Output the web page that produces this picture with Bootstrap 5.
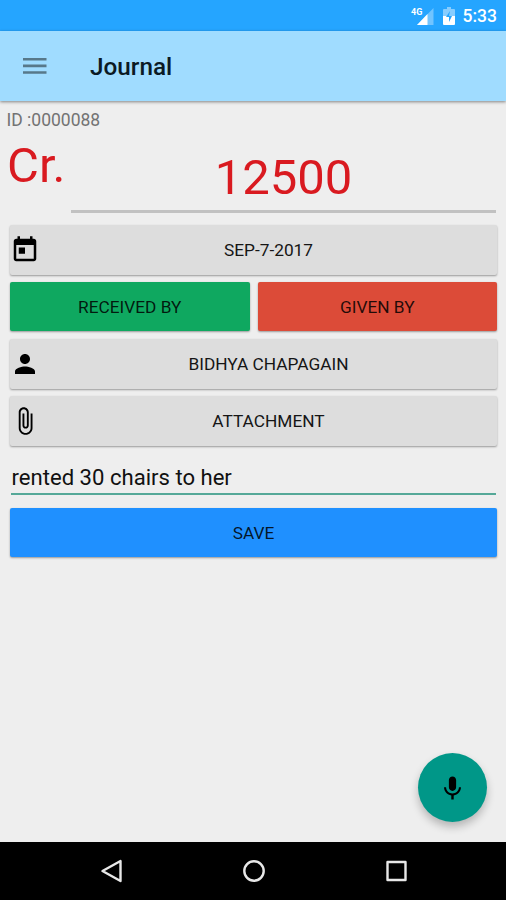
<!DOCTYPE html>
<html lang="en">
<head>
<meta charset="utf-8">
<meta name="viewport" content="width=device-width, initial-scale=1">
<title>Journal</title>
<link href="https://cdn.jsdelivr.net/npm/bootstrap@5.3.0/dist/css/bootstrap.min.css" rel="stylesheet">
<style>
  body { font-family: Roboto, "Liberation Sans", sans-serif; background: #eee; color: #111; height: 900px; overflow: hidden; }
  svg { display: block; flex: none; }
  .status-bar { height: 31px; background: #25a5ff; padding-right: 9px; }
  .clock { font-size: 17.5px; font-weight: 500; line-height: 31px; margin-left: 8px; padding-top: 1px; }
  .app-bar { height: 70px; background: #a0dcff; padding: 0 0 0 23px; box-shadow: 0 1px 3px rgba(0,0,0,.45); z-index: 1; }
  .app-title { font-size: 24.3px; font-weight: 500; line-height: 70px; margin-left: 43px; padding-top: 2px; color: #0b1a24; }
  .entry-id { font-size: 17.5px; line-height: 24px; padding: 7px 0 0 6.5px; color: #737373; }
  .amount-row { height: 88px; padding: 0 10px 0 7px; color: #d91a20; font-size: 49px; line-height: 58px; }
  .kind { width: 64px; padding-top: 5px; }
  .amount { height: 81px; padding-top: 17px; border-bottom: 3px solid #c1c1c1; }
  .entry-form { padding: 5px 9px 0 10px; gap: 7px; }
  .tile { height: 50px; padding: 0; border: 0; border-radius: 2px; font-size: 17.3px; line-height: 50px; color: #151515; background: #ddd; box-shadow: 0 1px 2px rgba(0,0,0,.36); }
  .tile:hover { background: #ddd; }
  .tile-in, .tile-out, .tile-save { height: 49px; color: rgba(0,0,0,.85); }
  .action-pair { padding: 0 0 1px; }
  .tile-in, .tile-in:hover { background: #0fa860; }
  .tile-out, .tile-out:hover { background: #dc4b38; }
  .tile-save, .tile-save:hover { background: #1f90ff; }
  .note { height: 42px; margin: 0 1px 6px 1px; padding-left: .5px; border-bottom: 2px solid #55a898; font-size: 22.100px; line-height: 48px; }
  .fab { width: 69px; height: 69px; right: 19px; bottom: 20px; padding: 1px 0 0; background: #009788; border: 0; box-shadow: 0 5px 8px rgba(0,0,0,.24); }
  .nav-keys { height: 58px; background: #000; padding-left: 97px; gap: 113px; }
</style>
<script src="https://cdn.jsdelivr.net/npm/bootstrap@5.3.0/dist/js/bootstrap.bundle.min.js"></script>
</head>
<body class="d-flex flex-column">
  <div class="status-bar d-flex align-items-center justify-content-end text-white">
    <svg width="24" height="20" viewBox="0 0 24 20"><path d="M22.500 2v17H6z" fill="#fff" opacity=".35"/><path d="M16.500 8v11H6z" fill="#fff"/><text x="0" y="9" font-size="9" font-weight="700" fill="#fff">4G</text></svg>
    <svg class="ms-2" width="12" height="18" viewBox="0 0 12 18"><path d="M4 0h4v2h3q1 0 1 1v6H0V3q0-1 1-1h3z" fill="#fff" opacity=".45"/><path d="M0 9h12v8q0 1-1 1H1q-1 0-1-1z" fill="#fff"/><path d="M7 4L3 10h3v5l3-6H6z" fill="#25a5ff"/></svg>
    <span class="clock">5:33</span>
  </div>

  <header class="app-bar d-flex align-items-center position-relative">
    <svg width="24" height="18" viewBox="0 0 24 18" fill="#57788a"><path d="M0 1h23.500v2.600H0zM0 7.600h23.500v2.600H0zM0 14.200h23.500v2.600H0z"/></svg>
    <h1 class="app-title mb-0">Journal</h1>
  </header>

  <main class="position-relative flex-grow-1">
    <div class="entry-id">ID :0000088</div>
    <div class="amount-row d-flex">
      <div class="kind">Cr.</div>
      <div class="amount flex-grow-1 text-center">12500</div>
    </div>

    <div class="entry-form d-flex flex-column">
      <button class="btn tile d-flex align-items-center">
        <svg width="30" height="30" viewBox="0 0 24 24"><path d="M19 3h-1V1h-2v2H8V1H6v2H5c-1.110 0-1.990.9-1.990 2L3 19c0 1.100.89 2 2 2h14c1.100 0 2-.9 2-2V5c0-1.100-.9-2-2-2zm0 16H5V8h14zM7 10h5v5H7z"/></svg>
        <span class="flex-grow-1">SEP-7-2017</span>
      </button>
      <div class="action-pair d-flex gap-2">
        <button class="btn tile tile-in flex-fill w-50">RECEIVED BY</button>
        <button class="btn tile tile-out flex-fill w-50">GIVEN BY</button>
      </div>
      <button class="btn tile d-flex align-items-center">
        <svg width="30" height="30" viewBox="0 0 24 24"><path d="M12 12c2.210 0 4-1.790 4-4s-1.790-4-4-4-4 1.790-4 4 1.790 4 4 4zm0 2c-2.670 0-8 1.340-8 4v2h16v-2c0-2.660-5.330-4-8-4z"/></svg>
        <span class="flex-grow-1">BIDHYA CHAPAGAIN</span>
      </button>
      <button class="btn tile d-flex align-items-center">
        <svg width="30" height="30" viewBox="0 0 24 24"><path d="M16.500 6v11.500c0 2.210-1.790 4-4 4s-4-1.790-4-4V5c0-1.380 1.120-2.500 2.500-2.500s2.500 1.120 2.500 2.500v10.500c0 .55-.45 1-1 1s-1-.45-1-1V6H10v9.500c0 1.380 1.120 2.500 2.500 2.500s2.500-1.120 2.500-2.500V5c0-2.210-1.790-4-4-4S7 2.790 7 5v12.500c0 3.040 2.460 5.500 5.500 5.500s5.500-2.460 5.500-5.500V6z"/></svg>
        <span class="flex-grow-1">ATTACHMENT</span>
      </button>
      <div class="note">rented 30 chairs to her</div>
      <button class="btn tile tile-save">SAVE</button>
    </div>

    <button class="btn fab rounded-circle position-absolute d-flex align-items-center justify-content-center" aria-label="Voice input">
      <svg width="29" height="29" viewBox="0 0 24 24"><path d="M12 14c1.660 0 2.990-1.340 2.990-3L15 5c0-1.660-1.340-3-3-3S9 3.340 9 5v6c0 1.660 1.340 3 3 3zm5.300-3c0 3-2.540 5.100-5.300 5.100S6.700 14 6.700 11H5c0 3.410 2.720 6.230 6 6.720V21h2v-3.280c3.280-.48 6-3.300 6-6.720z"/></svg>
    </button>
  </main>

  <nav class="nav-keys d-flex align-items-center">
    <svg width="28" height="28" viewBox="0 0 28 28" fill="none" stroke="#e8e8e8" stroke-width="2.400" stroke-linejoin="round"><path d="M23.500 4v20L5.500 14z"/></svg>
    <svg width="28" height="28" viewBox="0 0 28 28" fill="none" stroke="#e8e8e8" stroke-width="2.400"><circle cx="16" cy="14" r="9.700"/></svg>
    <svg width="28" height="28" viewBox="0 0 28 28" fill="none" stroke="#e8e8e8" stroke-width="2.400" stroke-linejoin="round"><path d="M8.500 5h18v18h-18z"/></svg>
  </nav>
</body>
</html>
